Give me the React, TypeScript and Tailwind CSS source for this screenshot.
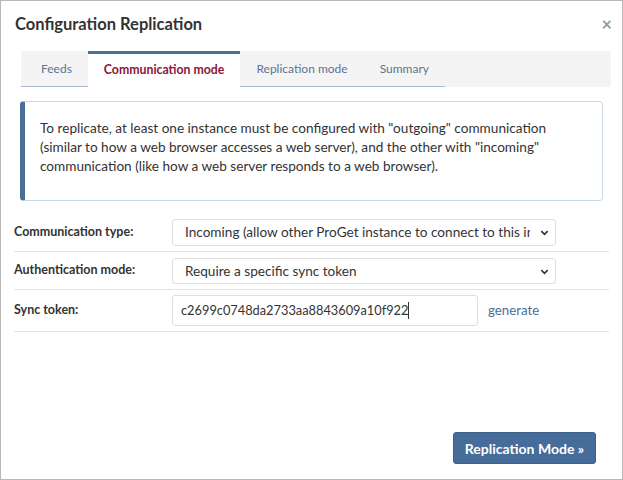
const tabs = ['Feeds', 'Communication mode', 'Replication mode', 'Summary'];

const Chevron = () => (
  <svg className="w-[9px] h-[9px] text-[#333]" viewBox="0 0 10 10" fill="none" stroke="currentColor" strokeWidth="1.8">
    <path d="M1.5 3.5 5 7l3.5-3.5" />
  </svg>
);

const FormRow = ({ label, children }: { label: string; children: React.ReactNode }) => (
  <div className="flex items-center border-b border-[#e3e3e3] py-[5px]">
    <div className="w-[158px] text-[12.5px] font-bold text-[#333]">{label}</div>
    {children}
  </div>
);

export default function App() {
  return (
    <div
      className="w-[623px] h-[480px] bg-white border border-[#b8b8b8] relative flex flex-col"
      style={{ fontFamily: 'Lato, "Open Sans", sans-serif' }}
    >
      <div className="flex items-center justify-between pl-[14px] pr-[10px] pt-[4px] h-[42px]">
        <h1 className="text-[16.5px] font-bold text-[#333]">Configuration Replication</h1>
        <span className="text-[#999] text-[18px] font-bold leading-none">×</span>
      </div>

      <div className="ml-[20px] mr-[11px] mt-[8px] h-[36px] bg-[#f4f4f4] flex items-end">
        <div className="flex border-b border-[#a8bbd0] h-full">
          {tabs.map((t, i) =>
            t === 'Communication mode' ? (
              <div
                key={t}
                className="bg-white border-t-[3px] border-[#4a6f98] px-[16px] flex items-center text-[12.3px] font-bold text-[#8a1538] -mb-px"
              >
                {t}
              </div>
            ) : (
              <div
                key={t}
                className={`${i === 0 ? 'pl-[20px] pr-[16px]' : 'px-[16px]'} flex items-center text-[12px] text-[#5b7592]`}
              >
                {t}
              </div>
            )
          )}
        </div>
      </div>

      <div className="mx-[19px] mt-[14px] border border-[#cbdaeb] border-l-[5px] border-l-[#4a6f98] rounded-[4px] pl-[15px] pr-[10px] pt-[17px] pb-[24px] text-[13.6px] leading-[19px] text-[#333]">
        To replicate, at least one instance must be configured with "outgoing" communication
        <br />
        (similar to how a web browser accesses a web server), and the other with "incoming"
        <br />
        communication (like how a web server responds to a web browser).
      </div>

      <div className="mx-[13px] mt-[13px]">
        <FormRow label="Communication type:">
          <div className="w-[384px] h-[27px] border border-[#ddd] rounded-[3px] flex items-center pl-[12px] pr-[6px] gap-[10px]">
            <span className="flex-1 overflow-hidden whitespace-nowrap text-[13.6px] text-[#333]">
              Incoming (allow other ProGet instance to connect to this instance)
            </span>
            <Chevron />
          </div>
        </FormRow>
        <FormRow label="Authentication mode:">
          <div className="w-[384px] h-[26px] mt-px border border-[#ddd] rounded-[3px] flex items-center pl-[12px] pr-[6px] gap-[10px]">
            <span className="flex-1 overflow-hidden whitespace-nowrap text-[13.6px] text-[#333]">
              Require a specific sync token
            </span>
            <Chevron />
          </div>
        </FormRow>
        <FormRow label="Sync token:">
          <div className="w-[306px] h-[31px] border border-[#ddd] rounded-[3px] flex items-center pl-[8px] text-[12.8px] text-[#333]">
            c2699c0748da2733aa8843609a10f922
            <span className="inline-block w-px h-[17px] bg-[#333]" />
          </div>
          <a className="ml-[10px] text-[13.3px] text-[#4a6f98]">generate</a>
        </FormRow>
      </div>

      <div className="flex-1 flex items-end justify-end pr-[26px] pb-[15px]">
        <button className="h-[32px] w-[143px] bg-[#466c9a] rounded-[3px] text-white text-[14px] font-bold border border-[#3d6089]">
          Replication Mode »
        </button>
      </div>
    </div>
  );
}
